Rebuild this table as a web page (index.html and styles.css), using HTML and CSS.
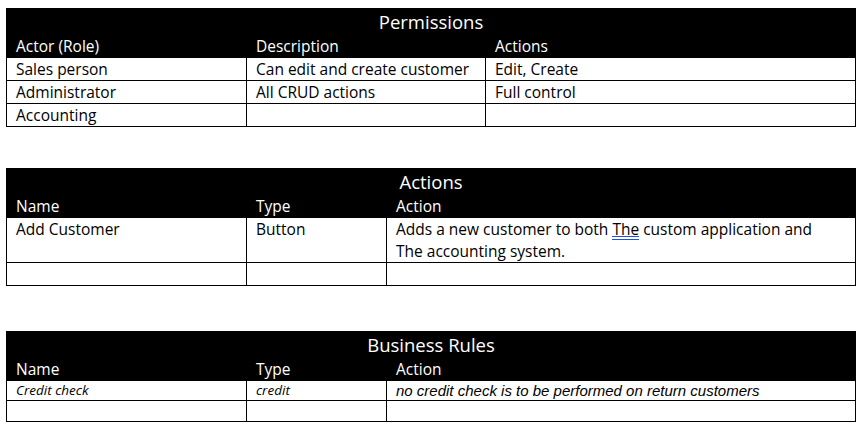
FILE: index.html
```html
<!DOCTYPE html>
<html>
<head>
<meta charset="utf-8">
<link rel="stylesheet" href="styles.css">
</head>
<body>
<div class="page">
  <table class="grid perms">
    <colgroup><col class="c1"><col class="c2a"><col class="c3a"></colgroup>
    <tr class="title"><th colspan="3">Permissions</th></tr>
    <tr class="head"><th>Actor (Role)</th><th>Description</th><th>Actions</th></tr>
    <tr class="row"><td>Sales person</td><td>Can edit and create customer</td><td>Edit, Create</td></tr>
    <tr class="row"><td>Administrator</td><td>All CRUD actions</td><td>Full control</td></tr>
    <tr class="row"><td>Accounting</td><td></td><td></td></tr>
  </table>

  <table class="grid actions">
    <colgroup><col class="c1"><col class="c2b"><col class="c3b"></colgroup>
    <tr class="title"><th colspan="3">Actions</th></tr>
    <tr class="head"><th>Name</th><th>Type</th><th>Action</th></tr>
    <tr class="row tall"><td>Add Customer</td><td>Button</td><td>Adds a new customer to both <span class="grammar">The</span> custom application and<br>The accounting system.</td></tr>
    <tr class="row"><td></td><td></td><td></td></tr>
  </table>

  <table class="grid rules">
    <colgroup><col class="c1"><col class="c2b"><col class="c3b"></colgroup>
    <tr class="title"><th colspan="3">Business Rules</th></tr>
    <tr class="head"><th>Name</th><th>Type</th><th>Action</th></tr>
    <tr class="row small"><td class="it">Credit check</td><td class="it">credit</td><td class="it arial">no credit check is to be performed on return customers</td></tr>
    <tr class="row small2"><td></td><td></td><td></td></tr>
  </table>
</div>
</body>
</html>
```

FILE: styles.css
```css
html, body {
  margin: 0;
  padding: 0;
  background: #ffffff;
}

.page {
  padding: 8px 0 0 6px;
  font-family: "Open Sans", Lato, "Liberation Sans", sans-serif;
  font-size: 15.5px;
  color: #000;
}

.grid {
  border-collapse: collapse;
  table-layout: fixed;
  width: 849px;
}

.grid.actions { margin-top: 41px; }
.grid.rules { margin-top: 45px; }

.c1 { width: 240px; }
.c2a { width: 239px; }
.c3a { width: 370px; }
.c2b { width: 140px; }
.c3b { width: 469px; }

.grid th,
.grid td {
  border: 1px solid #000;
  padding: 0 9px;
  text-align: left;
  font-weight: normal;
  vertical-align: top;
  overflow: hidden;
  white-space: nowrap;
}

.title th {
  background: #000;
  color: #fff;
  text-align: center;
  font-size: 18.5px;
  height: 26px;
  line-height: 26px;
  padding: 0;
  border-bottom: 0;
}

.head th {
  background: #000;
  color: #fff;
  height: 22px;
  line-height: 22px;
  border-top: 0;
}

.row td {
  height: 22px;
  line-height: 22px;
}

.row.tall td {
  height: 44px;
  line-height: 22px;
}

.row.small td {
  height: 19px;
  line-height: 19px;
}

.row.small2 td {
  height: 20px;
}

.it {
  font-style: italic;
  font-size: 13.5px;
}

.it.arial {
  font-family: "Liberation Sans", Arial, sans-serif;
  font-size: 15px;
}

.grammar {
  display: inline-block;
  vertical-align: top;
  line-height: 22px;
  height: 22px;
  background:
    linear-gradient(#1f4fe0, #1f4fe0) 0 18px / 100% 1px no-repeat,
    linear-gradient(#1f4fe0, #1f4fe0) 0 21px / 100% 1px no-repeat;
}
```
